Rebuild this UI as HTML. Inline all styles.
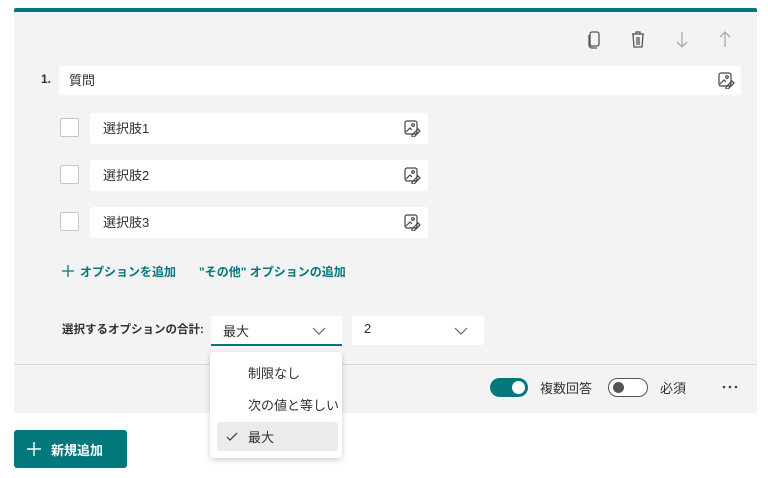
<!DOCTYPE html><html><head><meta charset="utf-8"><style>
body{margin:0;width:768px;height:478px;background:#fff;font-family:"Liberation Sans","Noto Sans CJK JP",sans-serif;font-size:13px;color:#323130;position:relative;overflow:hidden}
.a{position:absolute}
.box{position:absolute;background:#fff;border-radius:3px}
.cb{position:absolute;width:17px;height:17px;border:1px solid #c8c6c4;background:#fff;border-radius:2px}
.t{position:absolute;white-space:nowrap}
</style></head><body>
<div class="a" style="left:14px;top:8px;width:743px;height:4px;background:#03787c;border-radius:2px 2px 0 0"></div>
<div class="a" style="left:14px;top:12px;width:743px;height:401px;background:#f3f3f3"></div>
<div class="a" style="left:14px;top:364px;width:743px;height:1px;background:#d6d6d6"></div>
<svg class="a" style="left:586px;top:30px" width="150" height="20" fill="none" stroke-width="1.3">
<rect x="4" y="2" width="9" height="14" rx="2" stroke="#555"/><path d="M3 5v10a3 3 0 0 0 3 3h5" stroke="#555"/>
<path d="M46 4h12M50 4V2h4v2M47 4l1 13h8l1-13M51 7v8M53 7v8" stroke="#555"/>
<path d="M96 2v15M91 12l5 5 5-5" stroke="#aaa"/>
<path d="M139 17V2M134 7l5-5 5 5" stroke="#aaa"/>
</svg>
<div class="t" style="left:41px;top:72px;font-size:12px;font-weight:bold">1.</div>
<div class="box" style="left:59px;top:66px;width:682px;height:29px"></div>
<div class="t" style="left:69px;top:70px">質問</div>
<svg class="a" style="left:717px;top:71px" width="18" height="18" fill="none" stroke="#444" stroke-width="1.2"><rect x="2" y="2" width="12" height="13" rx="2"/><circle cx="10" cy="6" r="1.3"/><path d="M3 13l4-4 2 2M9 16l6-6 2 2-6 6H9z"/></svg>
<div class="cb" style="left:60px;top:118px"></div><div class="box" style="left:90px;top:113px;width:338px;height:31px"></div><div class="t" style="left:103px;top:118px">選択肢1</div>
<div class="cb" style="left:60px;top:165px"></div><div class="box" style="left:90px;top:160px;width:338px;height:31px"></div><div class="t" style="left:103px;top:165px">選択肢2</div>
<div class="cb" style="left:60px;top:212px"></div><div class="box" style="left:90px;top:207px;width:338px;height:31px"></div><div class="t" style="left:103px;top:212px">選択肢3</div>
<svg class="a" style="left:403px;top:119px" width="18" height="18" fill="none" stroke="#444" stroke-width="1.2"><rect x="2" y="2" width="12" height="13" rx="2"/><circle cx="10" cy="6" r="1.3"/><path d="M3 13l4-4 2 2M9 16l6-6 2 2-6 6H9z"/></svg>
<svg class="a" style="left:403px;top:166px" width="18" height="18" fill="none" stroke="#444" stroke-width="1.2"><rect x="2" y="2" width="12" height="13" rx="2"/><circle cx="10" cy="6" r="1.3"/><path d="M3 13l4-4 2 2M9 16l6-6 2 2-6 6H9z"/></svg>
<svg class="a" style="left:403px;top:213px" width="18" height="18" fill="none" stroke="#444" stroke-width="1.2"><rect x="2" y="2" width="12" height="13" rx="2"/><circle cx="10" cy="6" r="1.3"/><path d="M3 13l4-4 2 2M9 16l6-6 2 2-6 6H9z"/></svg>
<svg class="a" style="left:61px;top:264px" width="14" height="14" stroke="#03787c" stroke-width="1.3"><path d="M7 1v12M1 7h12"/></svg>
<div class="t" style="left:80px;top:263px;color:#03787c;font-weight:bold;font-size:12px">オプションを追加</div>
<div class="t" style="left:199px;top:263px;color:#03787c;font-weight:bold;font-size:12px">"その他" オプションの追加</div>
<div class="t" style="left:62px;top:321px;font-weight:bold;font-size:11.5px">選択するオプションの合計:</div>
<div class="box" style="left:211px;top:316px;width:131px;height:28px;border-bottom:2px solid #03787c;border-radius:3px 3px 0 0"></div>
<div class="t" style="left:223px;top:321px">最大</div>
<div class="box" style="left:352px;top:316px;width:132px;height:29px"></div>
<div class="t" style="left:364px;top:321px">2</div>
<svg class="a" style="left:312px;top:326px" width="160" height="10" fill="none" stroke="#666" stroke-width="1.2"><path d="M1 2l6 6 6-6M143 2l6 6 6-6"/></svg>
<div class="a" style="left:490px;top:378px;width:38px;height:19px;border-radius:10px;background:#03787c"></div>
<div class="a" style="left:512px;top:381px;width:13px;height:13px;border-radius:50%;background:#fff"></div>
<div class="t" style="left:540px;top:378px">複数回答</div>
<div class="a" style="left:608px;top:378px;width:38px;height:17px;border-radius:10px;border:1px solid #555;background:#fff"></div>
<div class="a" style="left:613px;top:382px;width:11px;height:11px;border-radius:50%;background:#555"></div>
<div class="t" style="left:660px;top:378px">必須</div>
<svg class="a" style="left:722px;top:385px" width="16" height="4" fill="#444"><circle cx="2" cy="2" r="1.3"/><circle cx="8" cy="2" r="1.3"/><circle cx="14" cy="2" r="1.3"/></svg>
<div class="a" style="left:210px;top:352px;width:132px;height:106px;background:#fff;border-radius:3px;box-shadow:0 2px 6px rgba(0,0,0,.2)"></div>
<div class="t" style="left:248px;top:363px">制限なし</div>
<div class="t" style="left:248px;top:395px">次の値と等しい</div>
<div class="a" style="left:217px;top:422px;width:121px;height:29px;background:#ebebeb;border-radius:3px"></div>
<svg class="a" style="left:226px;top:432px" width="12" height="10" fill="none" stroke="#333" stroke-width="1.2"><path d="M1 5l3 3 7-7"/></svg>
<div class="t" style="left:248px;top:427px">最大</div>
<div class="a" style="left:14px;top:430px;width:113px;height:38px;background:#03787c;border-radius:3px"></div>
<svg class="a" style="left:27px;top:442px" width="14" height="14" stroke="#fff" stroke-width="1.4"><path d="M7 0v14M0 7h14"/></svg>
<div class="t" style="left:51px;top:440px;color:#fff;font-weight:bold">新規追加</div>
</body></html>
